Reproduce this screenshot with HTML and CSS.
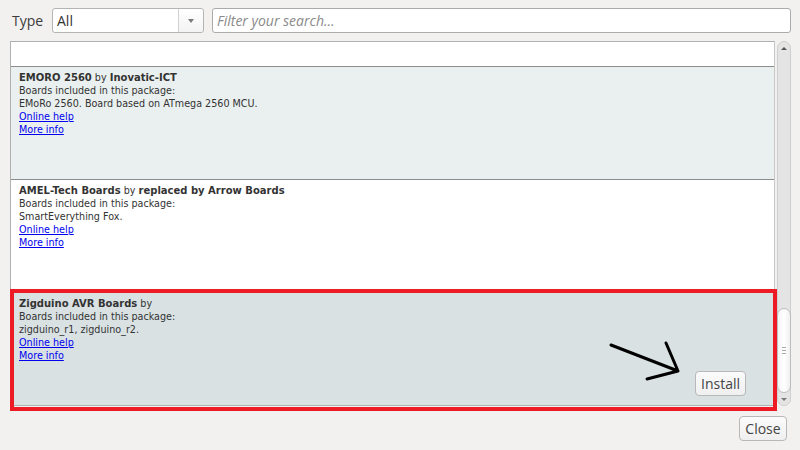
FILE: index.html
```html
<!DOCTYPE html>
<html>
<head>
<meta charset="utf-8">
<link rel="stylesheet" href="styles.css">
</head>
<body>
<div class="dialog">
  <div class="toolbar">
    <span class="type-label">Type</span>
    <div class="combo">
      <span class="combo-text">All</span>
      <span class="combo-btn"><span class="tri-down"></span></span>
    </div>
    <div class="filter">Filter your search...</div>
  </div>
  <div class="main">
    <div class="list">
      <div class="row row-partial"></div>
      <div class="row row-alt">
        <div class="title"><b>EMORO 2560</b> by <b>Inovatic-ICT</b></div>
        <div>Boards included in this package:</div>
        <div>EMoRo 2560. Board based on ATmega 2560 MCU.</div>
        <div><a href="#">Online help</a></div>
        <div><a href="#">More info</a></div>
      </div>
      <div class="row">
        <div class="title"><b>AMEL-Tech Boards</b> by <b>replaced by Arrow Boards</b></div>
        <div>Boards included in this package:</div>
        <div>SmartEverything Fox.</div>
        <div><a href="#">Online help</a></div>
        <div><a href="#">More info</a></div>
      </div>
      <div class="row row-sel">
        <div class="title"><b>Zigduino AVR Boards</b> by</div>
        <div>Boards included in this package:</div>
        <div>zigduino_r1, zigduino_r2.</div>
        <div><a href="#">Online help</a></div>
        <div><a href="#">More info</a></div>
        <button class="btn install">Install</button>
      </div>
    </div>
    <div class="scrollbar">
      <div class="sb-arrow"><span class="tri-up"></span></div>
      <div class="sb-track">
        <div class="sb-thumb"><span class="grip"></span></div>
      </div>
      <div class="sb-arrow"><span class="tri-down small"></span></div>
    </div>
  </div>
  <div class="footer">
    <button class="btn close">Close</button>
  </div>
  <div class="highlight"></div>
  <svg class="arrow" width="800" height="450" viewBox="0 0 800 450">
    <path d="M611 345 L678 371 M666 343 L678 371 L647 379" fill="none" stroke="#000" stroke-width="3" stroke-linecap="round" stroke-linejoin="round"/>
  </svg>
</div>
</body>
</html>
```
FILE: styles.css
```css
html, body {
  margin: 0;
  padding: 0;
}
body {
  background: #f2f1f0;
  width: 800px;
  height: 450px;
  overflow: hidden;
  font-family: "Open Sans", "DejaVu Sans", sans-serif;
  color: #3c3c3c;
}
.dialog {
  position: relative;
  width: 800px;
  height: 450px;
}
.toolbar {
  display: flex;
  align-items: center;
  height: 25px;
  padding: 8px 9px 0 12px;
}
.type-label {
  font-size: 14px;
  width: 40px;
  color: #3c3c3c;
}
.combo {
  display: flex;
  width: 150px;
  height: 23px;
  background: #fff;
  border: 1px solid #b4b4b4;
  border-radius: 3px;
  box-sizing: content-box;
}
.combo-text {
  flex: 1;
  font-size: 14px;
  line-height: 23px;
  padding-left: 4px;
  color: #333;
}
.combo-btn {
  width: 24px;
  border-left: 1px solid #d0d0d0;
  display: flex;
  align-items: center;
  justify-content: center;
  background: linear-gradient(#fff, #f3f3f3);
  border-radius: 0 3px 3px 0;
}
.tri-down {
  width: 0;
  height: 0;
  border-left: 3.5px solid transparent;
  border-right: 3.5px solid transparent;
  border-top: 4px solid #7a7a7a;
}
.tri-down.small {
  border-left-width: 3px;
  border-right-width: 3px;
  border-top-width: 3px;
}
.tri-up {
  width: 0;
  height: 0;
  border-left: 3px solid transparent;
  border-right: 3px solid transparent;
  border-bottom: 3px solid #555;
}
.filter {
  flex: 1;
  margin-left: 8px;
  height: 23px;
  line-height: 23px;
  background: #fff;
  border: 1px solid #ababab;
  border-radius: 3px;
  padding-left: 4px;
  font-size: 14px;
  font-style: italic;
  color: #8a8a8a;
}
.main {
  display: flex;
  margin: 8px 9px 0 10px;
  height: 365px;
}
.list {
  width: 764px;
  border: 1px solid #b0b0b0;
  border-right: 1px solid #c8c8c8;
  background: #fff;
  overflow: hidden;
  font-family: "DejaVu Sans", sans-serif;
  font-size: 9.6px;
  line-height: 13px;
  color: #333;
}
.row {
  border-bottom: 1px solid #8c8c8c;
  padding: 4px 8px 0 8px;
  box-sizing: border-box;
  height: 113px;
  display: flex;
  flex-direction: column;
  background: #fff;
}
.row-partial {
  height: 25px;
  padding: 0;
}
.row-alt {
  background: #eaf0f0;
}
.row-sel {
  background: #d9e1e3;
}
.title b {
  font-weight: bold;
  font-size: 10px;
  color: #333;
}
.row a {
  color: #0000ee;
  text-decoration: underline;
}
.btn {
  font-family: "Open Sans", "DejaVu Sans", sans-serif;
  font-size: 14px;
  color: #444;
  background: linear-gradient(#fbfbfb, #efefef);
  border: 1px solid #b8b8b8;
  border-radius: 4px;
  padding: 0 4px;
  height: 25px;
  cursor: default;
}
.install {
  align-self: flex-end;
  margin-top: auto;
  margin-bottom: 9px;
  margin-right: 20px;
  width: 51px;
}
.scrollbar {
  width: 14px;
  margin-left: 2px;
  display: flex;
  flex-direction: column;
  background: #e4e4e4;
  border: 1px solid #cfcfcf;
  border-radius: 7px;
  box-sizing: border-box;
}
.sb-arrow {
  height: 12px;
  display: flex;
  align-items: center;
  justify-content: center;
  flex: none;
}
.sb-track {
  flex: 1;
  display: flex;
  flex-direction: column;
  justify-content: flex-end;
}
.sb-thumb {
  height: 83px;
  margin: 0 -1px;
  background: linear-gradient(90deg, #f4f4f4, #fff, #f0f0f0);
  border: 1px solid #bdbdbd;
  border-radius: 7px;
  display: flex;
  align-items: center;
  justify-content: center;
}
.grip {
  width: 4px;
  height: 5px;
  border-top: 1px solid #aaa;
  border-bottom: 1px solid #aaa;
  position: relative;
}
.grip::after {
  content: "";
  position: absolute;
  left: 0;
  right: 0;
  top: 2px;
  border-top: 1px solid #aaa;
}
.footer {
  display: flex;
  justify-content: flex-end;
  padding: 10px 13px 0 0;
}
.close {
  width: 48px;
}
.highlight {
  position: absolute;
  left: 10px;
  top: 289px;
  width: 767px;
  height: 122px;
  border: 4px solid #ed1c24;
  box-sizing: border-box;
  pointer-events: none;
}
.arrow {
  position: absolute;
  left: 0;
  top: 0;
  pointer-events: none;
}
```
